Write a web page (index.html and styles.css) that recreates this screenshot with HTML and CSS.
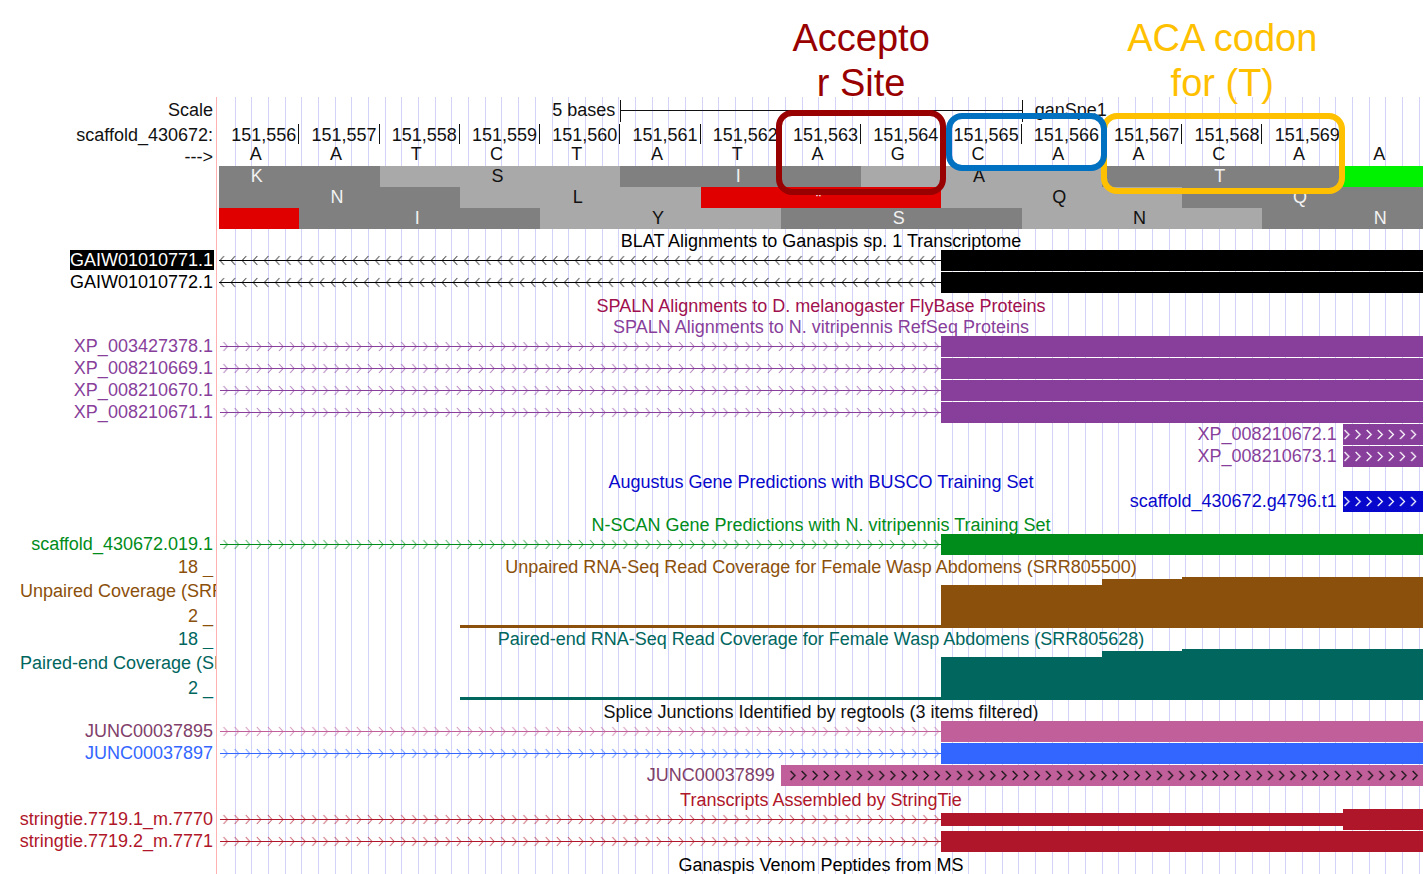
FILE: index.html
```html
<!DOCTYPE html>
<html lang="en">
<head>
<meta charset="utf-8">
<title>ganSpe1 scaffold_430672</title>
<link rel="stylesheet" href="styles.css">
</head>
<body>
<header class="callouts">
  <p class="callout callout-acceptor">Accepto<br>r Site</p>
  <p class="callout callout-codon">ACA codon<br>for (T)</p>
</header>
<main class="browser">
  <section class="ruler">
    <div class="row row-scale">
      <div class="label">Scale</div>
      <div class="plot">
        <span class="scale-size">5 bases</span><span class="scale-bar"></span><span class="assembly">ganSpe1</span>
      </div>
    </div>
    <div class="row row-position">
      <div class="label">scaffold_430672:</div>
      <div class="plot">
        <span>151,556</span><span>151,557</span><span>151,558</span><span>151,559</span><span>151,560</span><span>151,561</span><span>151,562</span><span>151,563</span><span>151,564</span><span>151,565</span><span>151,566</span><span>151,567</span><span>151,568</span><span>151,569</span>
      </div>
    </div>
    <div class="row row-bases">
      <div class="label">---&gt;</div>
      <div class="plot">
        <span>A</span><span>A</span><span>T</span><span>C</span><span>T</span><span>A</span><span>T</span><span>A</span><span>G</span><span>C</span><span>A</span><span>A</span><span>C</span><span>A</span><span>A</span>
      </div>
    </div>
    <div class="row row-frame">
      <div class="label"></div>
      <div class="plot">
        <span class="dark">K</span><span class="dark"></span><span class="light w3">S</span><span class="dark w3">I</span><span class="light w3">A</span><span class="dark w3">T</span><span class="start"></span>
      </div>
    </div>
    <div class="row row-frame">
      <div class="label"></div>
      <div class="plot">
        <span class="dark w3">N</span><span class="light w3">L</span><span class="stop w3">*</span><span class="light w3">Q</span><span class="dark w3">Q</span>
      </div>
    </div>
    <div class="row row-frame">
      <div class="label"></div>
      <div class="plot">
        <span class="stop"></span><span class="dark w3">I</span><span class="light w3">Y</span><span class="dark w3">S</span><span class="light w3">N</span><span class="dark"></span><span class="dark">N</span>
      </div>
    </div>
    <div class="marks">
      <div class="mark mark-acceptor"></div>
      <div class="mark mark-codon"></div>
      <div class="mark mark-split"></div>
    </div>
  </section>

  <section class="track black">
    <h2 class="title">BLAT Alignments to Ganaspis sp. 1 Transcriptome</h2>
    <div class="row item"><div class="label"><mark class="selected">GAIW01010771.1</mark></div><div class="plot"><span class="intron reverse"></span><span class="exon w6"></span></div></div>
    <div class="row item"><div class="label">GAIW01010772.1</div><div class="plot"><span class="intron reverse"></span><span class="exon w6"></span></div></div>
  </section>

  <section class="track magenta">
    <h2 class="title">SPALN Alignments to D. melanogaster FlyBase Proteins</h2>
  </section>

  <section class="track purple roomy">
    <h2 class="title">SPALN Alignments to N. vitripennis RefSeq Proteins</h2>
    <div class="row item"><div class="label">XP_003427378.1</div><div class="plot"><span class="intron"></span><span class="exon w6"></span></div></div>
    <div class="row item"><div class="label">XP_008210669.1</div><div class="plot"><span class="intron"></span><span class="exon w6"></span></div></div>
    <div class="row item"><div class="label">XP_008210670.1</div><div class="plot"><span class="intron"></span><span class="exon w6"></span></div></div>
    <div class="row item"><div class="label">XP_008210671.1</div><div class="plot"><span class="intron"></span><span class="exon w6"></span></div></div>
    <div class="row item"><div class="label"></div><div class="plot"><span class="name w14">XP_008210672.1</span><span class="exon strand"></span></div></div>
    <div class="row item"><div class="label"></div><div class="plot"><span class="name w14">XP_008210673.1</span><span class="exon strand"></span></div></div>
  </section>

  <section class="track navy">
    <h2 class="title">Augustus Gene Predictions with BUSCO Training Set</h2>
    <div class="row item"><div class="label"></div><div class="plot"><span class="name w14">scaffold_430672.g4796.t1</span><span class="exon strand"></span></div></div>
  </section>

  <section class="track green">
    <h2 class="title">N-SCAN Gene Predictions with N. vitripennis Training Set</h2>
    <div class="row item"><div class="label">scaffold_430672.019.1</div><div class="plot"><span class="intron"></span><span class="exon w6"></span></div></div>
  </section>

  <section class="track brown">
    <div class="row"><div class="label">18 _</div><h2 class="title">Unpaired RNA-Seq Read Coverage for Female Wasp Abdomens (SRR805500)</h2></div>
    <div class="row coverage">
      <div class="label"><span class="series">Unpaired Coverage (SRR805500)</span><span class="floor">2 _</span></div>
      <div class="plot"><span class="depth depth-low"></span><span class="depth depth-mid"></span><span class="depth depth-high"></span><span class="depth depth-max"></span></div>
    </div>
  </section>

  <section class="track teal">
    <div class="row"><div class="label">18 _</div><h2 class="title">Paired-end RNA-Seq Read Coverage for Female Wasp Abdomens (SRR805628)</h2></div>
    <div class="row coverage">
      <div class="label"><span class="series">Paired-end Coverage (SRR805628)</span><span class="floor">2 _</span></div>
      <div class="plot"><span class="depth depth-low"></span><span class="depth depth-mid"></span><span class="depth depth-high"></span><span class="depth depth-max"></span></div>
    </div>
  </section>

  <section class="track junctions">
    <h2 class="title">Splice Junctions Identified by regtools (3 items filtered)</h2>
    <div class="row item pink"><div class="label plum">JUNC00037895</div><div class="plot"><span class="intron"></span><span class="exon w6"></span></div></div>
    <div class="row item blue"><div class="label">JUNC00037897</div><div class="plot"><span class="intron"></span><span class="exon w6"></span></div></div>
    <div class="row item pink"><div class="label"></div><div class="plot"><span class="name w7 plum">JUNC00037899</span><span class="exon w8 strand strand-long"></span></div></div>
  </section>

  <section class="track crimson">
    <h2 class="title">Transcripts Assembled by StringTie</h2>
    <div class="row item"><div class="label">stringtie.7719.1_m.7770</div><div class="plot"><span class="intron"></span><span class="exon w5 utr"></span><span class="exon"></span></div></div>
    <div class="row item"><div class="label">stringtie.7719.2_m.7771</div><div class="plot"><span class="intron"></span><span class="exon w6"></span></div></div>
  </section>

  <section class="track black">
    <h2 class="title">Ganaspis Venom Peptides from MS</h2>
  </section>
</main>
</body>
</html>
```
FILE: styles.css
```css
* { box-sizing: border-box; }

body {
  margin: 0;
  background: #fff;
  color: #111;
  font: 18px/20px "Liberation Sans", Arial, sans-serif;
}

h2, p { margin: 0; font-weight: normal; }

/* Captions share the fifteen base columns of the plot below */
.callouts {
  display: grid;
  grid-template-columns: repeat(15, minmax(0, 1fr));
  height: 97px;
  padding: 16px 2px 0 219px;
  position: relative;
  z-index: 2;
}
.callout { font-size: 38px; line-height: 45px; text-align: center; white-space: nowrap; }
.callout-acceptor { grid-column: 8 / span 2; color: #990000; }
.callout-codon { grid-column: 12 / span 3; color: #ffc000; }

.browser {
  --step: calc(100% / 72.2);
  overflow: hidden;
  background:
    linear-gradient(#ffb0b0, #ffb0b0) 216px 0 / 1px 100% no-repeat,
    repeating-linear-gradient(90deg, transparent 0, transparent calc(var(--step) - 1px), #d3d3fa calc(var(--step) - 1px), #d3d3fa var(--step)) 219px 0 / calc(100% - 221px) 100% no-repeat;
}

.row {
  display: grid;
  grid-template-columns: 216px minmax(0, 1fr);
  column-gap: 3px;
  padding-right: 2px;
}
.label {
  display: flex;
  justify-content: flex-end;
  align-items: center;
  padding-right: 3px;
  white-space: nowrap;
  overflow: hidden;
}
.plot { display: grid; grid-template-columns: repeat(15, minmax(0, 1fr)); }

.w3 { grid-column: span 3; }
.w5 { grid-column: span 5; }
.w6 { grid-column: span 6; }
.w7 { grid-column: span 7; }
.w8 { grid-column: span 8; }
.w14 { grid-column: span 14; }

/* Ruler */
.ruler { position: relative; }
.row-scale { height: 26px; line-height: 26px; }
.scale-size { grid-column: span 5; text-align: right; padding-right: 5px; }
.scale-bar {
  grid-column: span 5;
  height: 22px;
  margin: 3px -1px 0 0;
  border: solid #111;
  border-width: 0 1px;
  background: linear-gradient(#111, #111) 0 10px / 100% 1px no-repeat;
}
.assembly { grid-column: span 5; padding-left: 13px; }

.row-position { height: 24px; line-height: 24px; }
.row-position .plot span {
  text-align: right;
  padding-right: 3px;
  background: linear-gradient(#111, #111) 100% 1px / 1px 20px no-repeat;
}

.row-bases { height: 19px; }
.row-bases .plot { line-height: 15px; text-align: center; }
.row-bases .plot span { padding-right: 7px; }

.row-frame { height: 21px; line-height: 21px; }
.row-frame .plot span { text-align: center; padding-right: 5px; }
.dark { background: #808080; color: #f2f2f2; }
.light { background: #a9a9a9; }
.stop { background: #e10000; color: #f2f2f2; }
.start { background: #00f200; }

/* Highlight frames laid over the ruler */
.marks { position: absolute; inset: 0 2px 0 219px; --base: calc(100% / 15); }
.mark { position: absolute; border: 6px solid; border-radius: 16px; }
.mark-acceptor {
  top: 13px;
  left: calc(var(--base) * 7 - 5px);
  width: calc(var(--base) * 2 + 10px);
  height: 85px;
  border-color: #990000;
}
.mark-codon {
  top: 16px;
  left: calc(var(--base) * 11 - 1px);
  width: calc(var(--base) * 3 + 3px);
  height: 81px;
  border-color: #ffc000;
}
.mark-split {
  top: 16px;
  left: calc(var(--base) * 9 + 5px);
  width: calc(var(--base) * 2);
  height: 58px;
  border-color: #0070c0;
}

/* Tracks */
.title {
  height: 21px;
  padding-top: 2px;
  font-size: 18px;
  line-height: 19px;
  text-align: center;
  white-space: nowrap;
}
.track > .title { margin: 0 2px 0 219px; padding-top: 3px; }
.item { height: 22px; padding-bottom: 1px; }
.item .label { align-items: flex-start; }
.roomy { padding-bottom: 2px; }
.junctions { padding-bottom: 1px; }
.selected { background: #000; color: #fff; margin-right: -1px; padding-right: 1px; }
.name { text-align: right; padding-right: 6px; }

.black { color: #000; }
.magenta { color: #a0104e; }
.purple { color: #883f9b; }
.navy { color: #0808cc; }
.green { color: #008c1a; }
.brown { color: #8b500b; }
.teal { color: #00665e; }
.pink { color: #c05f99; }
.plum { color: #80406a; }
.blue { color: #3366ff; }
.crimson { color: #b01629; }

/* Each strand line is one vector mask holding a repeating chevron */
.intron { grid-column: span 9; display: grid; }
.intron::after,
.strand::after {
  content: "";
  background: currentColor;
  -webkit-mask: var(--chevrons) 0 0 / 100% 100% no-repeat;
  mask: var(--chevrons) 0 0 / 100% 100% no-repeat;
}
.intron {
  --chevrons: url("data:image/svg+xml,%3Csvg xmlns='http://www.w3.org/2000/svg' width='100%25' height='100%25'%3E%3Cdefs%3E%3Cpattern id='p' width='11.11' height='21' patternUnits='userSpaceOnUse'%3E%3Cpath d='M4.5 6 L8.5 10.5 L4.5 15' fill='none' stroke='black' stroke-opacity='0.7'/%3E%3C/pattern%3E%3C/defs%3E%3Crect width='100%25' height='21' fill='url(%23p)'/%3E%3Crect x='1' y='10' width='100%25' height='1'/%3E%3C/svg%3E");
}
.intron.reverse {
  --chevrons: url("data:image/svg+xml,%3Csvg xmlns='http://www.w3.org/2000/svg' width='100%25' height='100%25'%3E%3Cdefs%3E%3Cpattern id='p' width='11.11' height='21' patternUnits='userSpaceOnUse'%3E%3Cpath d='M5 6 L1 10.5 L5 15' fill='none' stroke='black' stroke-opacity='0.7'/%3E%3C/pattern%3E%3C/defs%3E%3Crect width='100%25' height='21' fill='url(%23p)'/%3E%3Crect y='10' width='100%25' height='1'/%3E%3C/svg%3E");
}

.exon { display: grid; background: currentColor; }
.utr { margin: 4px 0; }
.strand {
  --chevrons: url("data:image/svg+xml,%3Csvg xmlns='http://www.w3.org/2000/svg' width='100%25' height='100%25'%3E%3Cdefs%3E%3Cpattern id='p' width='11.11' height='21' patternUnits='userSpaceOnUse'%3E%3Cpath d='M1.5 6 L6 10.5 L1.5 15' fill='none' stroke='black' stroke-width='1.2'/%3E%3C/pattern%3E%3C/defs%3E%3Crect width='100%25' height='21' fill='url(%23p)'/%3E%3C/svg%3E");
  padding-right: 4px;
}
.strand::after { background-color: #fff; }
.strand-long { padding-left: 8px; }
.strand-long::after { background-color: #111; }

/* Read coverage */
.coverage { height: 51px; }
.coverage .label { flex-direction: column; align-items: flex-end; justify-content: flex-start; }
.series { align-self: flex-start; padding-left: 20px; line-height: 28px; }
.floor { line-height: 22px; }
.coverage .plot { align-items: end; }
.depth { background: currentColor; }
.depth-low { grid-column: 4 / span 6; height: 3px; }
.depth-mid { grid-column: span 2; height: 43px; }
.depth-high { height: 49px; }
.depth-max { grid-column: span 3; height: 51px; }
```
